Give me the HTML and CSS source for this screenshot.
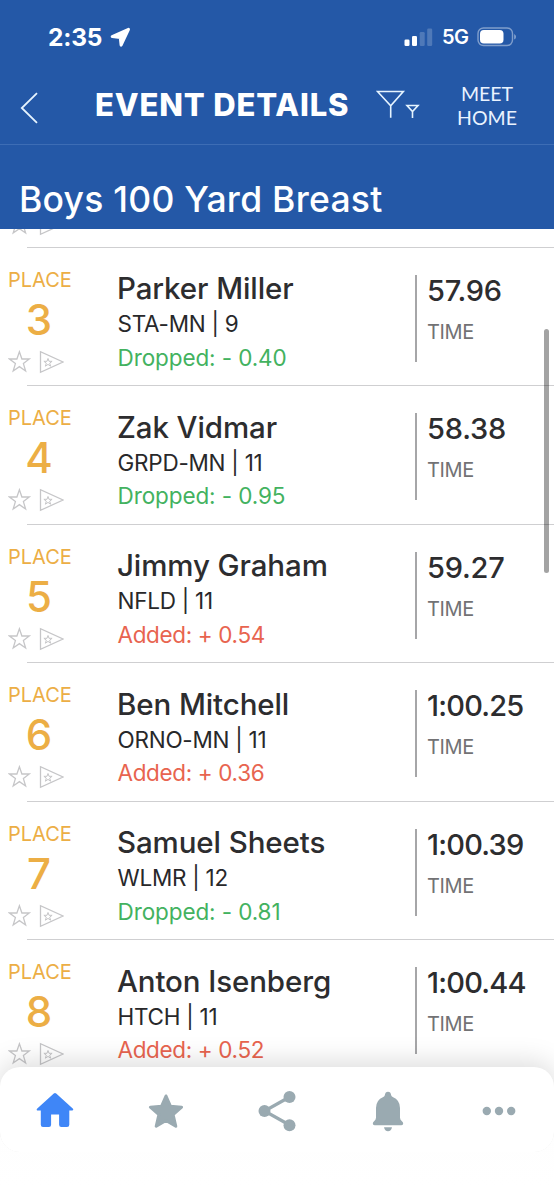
FILE: index.html
```html
<!DOCTYPE html>
<html lang="en">
  <head>
    <meta charset="UTF-8" />
    <meta name="viewport" content="width=device-width, initial-scale=1.0" />
    <title>Event Details</title>
    <link rel="stylesheet" href="styles.css">
  </head>
  <body>
    <!-- Shared row icons -->
    <svg class="sprite" aria-hidden="true">
      <symbol id="row-icons" viewBox="0 0 56 24">
        <g fill="none" stroke="#c6c6c8" stroke-width="1.3">
          <path d="M11.4 1.8l2.5 7.2h7.4l-5.9 4.6 2.2 7.4-6.2-4.4-6.2 4.4 2.2-7.4L1.500 9h7.400z" />
          <path d="M32.500 1.700v20.600L55 12z" />
          <path stroke-width="1" d="M40 8.500l1 2.800h3.100l-2.400 1.900.9 3-2.600-1.800-2.600 1.800.9-3-2.400-1.900H39z" />
        </g>
      </symbol>
    </svg>

    <header>
      <div class="status-bar">
        <span class="clock">2:35</span>
        <svg class="location" width="21" height="21" viewBox="0 0 21 21">
          <path fill="#fff" stroke="#fff" stroke-width="3" stroke-linejoin="round" d="M18.500 2.300L2.200 9.600l8.100 1 .8 7.600z" />
        </svg>
        <svg class="signal" width="29" height="19" viewBox="0 0 29 19">
          <g fill="#fff">
            <rect x="0.5" y="11.5" width="5" height="6.5" rx="1.3" />
            <rect x="8" y="8" width="5" height="10" rx="1.3" />
            <rect x="15.7" y="4" width="5" height="14" rx="1.3" opacity=".2" />
            <rect x="23.2" y="0.5" width="5" height="17.5" rx="1.3" opacity=".2" />
          </g>
        </svg>
        <span class="network">5G</span>
        <svg class="battery" width="40" height="20" viewBox="0 0 40 20">
          <rect x="1" y="1" width="34.5" height="17.5" rx="5.5" fill="none" stroke="#fff" stroke-opacity=".42" stroke-width="1.4" />
          <rect x="3" y="3" width="23.5" height="13.5" rx="3.8" fill="#fff" />
          <path d="M37.2 7v5.5q1.8-.8 1.8-2.7T37.2 7z" fill="#fff" opacity=".45" />
        </svg>
      </div>

      <nav class="nav-bar">
        <svg class="back" width="18" height="32" viewBox="0 0 18 32">
          <path fill="none" stroke="#e6f4ff" stroke-width="1.8" d="M17 1.200L1.800 16 17 30.800" />
        </svg>
        <h1>EVENT DETAILS</h1>
        <svg class="filter" width="44" height="30" viewBox="0 0 44 30">
          <g fill="none" stroke="#e6f4ff" stroke-width="1.6">
            <path d="M1.500 1.500H27.300L14.700 15.700zM14.700 15.200v12.500" />
            <path d="M31 15.500h11l-5.500 6zM36.500 21v7" />
          </g>
        </svg>
        <a class="meet-home">MEET<br />HOME</a>
      </nav>

      <h2>Boys 100 Yard Breast</h2>
    </header>

    <main>
      <div class="peek"><svg class="icons"><use href="#row-icons" /></svg></div>

      <article class="row">
        <div class="place">
          <small>PLACE</small>
          <strong>3</strong>
          <svg class="icons"><use href="#row-icons" /></svg>
        </div>
        <div class="swimmer">
          <h3>Parker Miller</h3>
          <p>STA-MN | 9</p>
          <p class="dropped">Dropped: - 0.40</p>
        </div>
        <div class="time">
          <strong>57.96</strong>
          <small>TIME</small>
        </div>
      </article>

      <article class="row">
        <div class="place">
          <small>PLACE</small>
          <strong>4</strong>
          <svg class="icons"><use href="#row-icons" /></svg>
        </div>
        <div class="swimmer">
          <h3>Zak Vidmar</h3>
          <p>GRPD-MN | 11</p>
          <p class="dropped">Dropped: - 0.95</p>
        </div>
        <div class="time">
          <strong>58.38</strong>
          <small>TIME</small>
        </div>
      </article>

      <article class="row">
        <div class="place">
          <small>PLACE</small>
          <strong>5</strong>
          <svg class="icons"><use href="#row-icons" /></svg>
        </div>
        <div class="swimmer">
          <h3>Jimmy Graham</h3>
          <p>NFLD | 11</p>
          <p class="added">Added: + 0.54</p>
        </div>
        <div class="time">
          <strong>59.27</strong>
          <small>TIME</small>
        </div>
      </article>

      <article class="row">
        <div class="place">
          <small>PLACE</small>
          <strong>6</strong>
          <svg class="icons"><use href="#row-icons" /></svg>
        </div>
        <div class="swimmer">
          <h3>Ben Mitchell</h3>
          <p>ORNO-MN | 11</p>
          <p class="added">Added: + 0.36</p>
        </div>
        <div class="time">
          <strong class="long">1:00.25</strong>
          <small>TIME</small>
        </div>
      </article>

      <article class="row">
        <div class="place">
          <small>PLACE</small>
          <strong>7</strong>
          <svg class="icons"><use href="#row-icons" /></svg>
        </div>
        <div class="swimmer">
          <h3>Samuel Sheets</h3>
          <p>WLMR | 12</p>
          <p class="dropped">Dropped: - 0.81</p>
        </div>
        <div class="time">
          <strong class="long">1:00.39</strong>
          <small>TIME</small>
        </div>
      </article>

      <article class="row">
        <div class="place">
          <small>PLACE</small>
          <strong>8</strong>
          <svg class="icons"><use href="#row-icons" /></svg>
        </div>
        <div class="swimmer">
          <h3>Anton Isenberg</h3>
          <p>HTCH | 11</p>
          <p class="added">Added: + 0.52</p>
        </div>
        <div class="time">
          <strong class="long">1:00.44</strong>
          <small>TIME</small>
        </div>
      </article>
    </main>

    <div class="scrollbar"></div>

    <footer>
      <nav class="tab-bar">
        <svg viewBox="0 0 44 44">
          <path fill="#3f86f7" d="M20.8 4.600q1.200-1 2.400 0L40 19.700q1 1.800-.8 1.800h-2.900v14.200q0 2.300-2.300 2.300h-5.700q-2.200 0-2.200-2.200V25.400h-8v10.400q0 2.200-2.200 2.200H10q-2.200 0-2.200-2.200V21.500H4.900q-1.900 0-.9-1.800z" />
        </svg>
        <svg viewBox="0 0 44 44">
          <path fill="#9aaab1" stroke="#9aaab1" stroke-width="3" stroke-linejoin="round" d="M22 7l4.400 10.200 11.200 1-8.500 7.300 2.700 11.800L22 31.500l-9.800 5.800 2.700-11.800-8.500-7.300 11.200-1z" />
        </svg>
        <svg viewBox="0 0 44 44">
          <path fill="none" stroke="#9aaab1" stroke-width="3.2" d="M34.500 8L9.500 22l25 14" />
          <g fill="#9aaab1">
            <circle cx="34.5" cy="8" r="6" />
            <circle cx="9.5" cy="22" r="6" />
            <circle cx="34.500" cy="36.2" r="6" />
          </g>
        </svg>
        <svg viewBox="0 0 44 44">
          <g fill="#9aaab1">
            <path d="M22 2.800q2.700 0 3.200 3.400.2 1.100 1.500 1.800Q34 11 34 19v9.500q0 2.200 1.700 3.500 1.500 1 1.500 2.500 0 1.800-1.800 1.800H8.600q-1.800 0-1.800-1.800 0-1.500 1.500-2.500Q10 30.700 10 28.500V19Q10 11 17.300 8q1.300-.7 1.500-1.800.5-3.400 3.200-3.400z" />
            <path d="M18 38.300h8q-.8 4-4 4t-4-4z" />
          </g>
        </svg>
        <svg viewBox="0 0 44 44">
          <g fill="#9aaab1">
            <circle cx="9.8" cy="22" r="4.200" />
            <circle cx="22" cy="22" r="4.200" />
            <circle cx="34.200" cy="22" r="4.200" />
          </g>
        </svg>
      </nav>
    </footer>
  </body>
</html>
```
FILE: styles.css
```css
/*
  Global styles
*/

* {
  margin: 0;
  padding: 0;
  box-sizing: border-box;
}
:root {
  --blue: #2458a7;
  --orange: #ecae45;
  --green: #43b25f;
  --red: #e8644f;
  --ink: #2d2d2f;
  --gray: #727274;
}
body {
  height: 1200px;
  overflow: hidden;
  position: relative;
  background-color: #fff;
  font-family: Inter, sans-serif;
}
svg {
  display: block;
  flex: none;
}
.sprite {
  width: 0;
  height: 0;
  position: absolute;
}

/*
  Header
*/

header {
  color: #fff;
  height: 228.5px;
  background-color: var(--blue);
}
.status-bar {
  height: 74px;
  display: flex;
  align-items: center;
  padding: 0 37px 0 48px;
}
.clock {
  width: 62px;
  font-size: 24.5px;
  font-weight: 700;
  letter-spacing: -0.2px;
}
.signal {
  margin-left: auto;
}
.network {
  width: 44px;
  padding-left: 9px;
  font-size: 20px;
  font-weight: 600;
  letter-spacing: -0.6px;
}
.nav-bar {
  height: 71px;
  display: flex;
  padding-left: 20px;
  border-bottom: 1.5px solid #3d6db5;
}
.back {
  margin-top: 18px;
}
h1 {
  width: 283px;
  padding: 12px 0 0 57px;
  font-size: 31px;
  font-weight: 800;
  line-height: 38px;
  letter-spacing: 0.85px;
  white-space: nowrap;
}
.filter {
  margin: 16px 0 0 55px;
}
.meet-home {
  flex: 1;
  padding-top: 8px;
  color: #eaf3ff;
  font-family: Lato, sans-serif;
  font-size: 19.5px;
  line-height: 24px;
  text-align: center;
}
h2 {
  padding: 33px 0 0 19px;
  font-size: 35.5px;
  font-weight: 500;
  line-height: 44px;
  letter-spacing: 0.25px;
  white-space: nowrap;
}

/*
  Results list
*/

.icons {
  width: 56px;
  height: 24px;
}
.peek {
  height: 19px;
  overflow: hidden;
  padding-left: 8px;
  position: relative;
}
.peek .icons {
  margin-top: -17px;
}
.peek::after,
.row::after {
  content: "";
  left: 27px;
  right: 0;
  bottom: 0;
  height: 1px;
  position: absolute;
  background-color: #cfcfd1;
}
.row:last-child::after {
  display: none;
}
.row {
  height: 138.6px;
  display: grid;
  position: relative;
  grid-template-columns: 118px 297px 1fr;
}
.row small,
.row strong {
  display: block;
}
.place {
  padding: 20px 0 0 8px;
  color: var(--orange);
}
.place small {
  width: 63px;
  font-size: 20px;
  line-height: 24px;
}
.place strong {
  width: 62px;
  font-size: 42px;
  font-weight: 500;
  line-height: 50px;
  text-align: center;
  margin-top: 3px;
}
.place .icons {
  margin-top: 5px;
}
.swimmer {
  padding-top: 22.5px;
}
.swimmer h3 {
  color: var(--ink);
  font-size: 29.5px;
  font-weight: 500;
  line-height: 36px;
  letter-spacing: -0.1px;
  margin-left: -1px;
}
.swimmer p {
  color: #28282a;
  font-size: 22.5px;
  line-height: 33.5px;
  letter-spacing: -0.25px;
  margin-left: -0.5px;
  position: relative;
  top: 1px;
}
.swimmer .dropped {
  color: var(--green);
  letter-spacing: -0.1px;
}
.swimmer .added {
  color: var(--red);
  letter-spacing: -0.35px;
}
.time {
  height: 87px;
  margin-top: 27px;
  padding-left: 10px;
  border-left: 2px solid #a6a6a8;
}
.time strong {
  color: var(--ink);
  font-size: 29px;
  font-weight: 500;
  line-height: 32px;
  letter-spacing: -0.2px;
}
.time .long {
  letter-spacing: -0.8px;
}
.time small {
  color: var(--gray);
  font-size: 20px;
  line-height: 24px;
  letter-spacing: -0.4px;
  margin-top: 13px;
}
.scrollbar {
  top: 329px;
  right: 5px;
  width: 5px;
  height: 244px;
  border-radius: 3px;
  position: absolute;
  background-color: rgba(0, 0, 0, 0.36);
}

/*
  Tab bar
*/

footer {
  left: 0;
  right: 0;
  bottom: 0;
  height: 133px;
  position: absolute;
  background: linear-gradient(transparent 20px, #fdfdfd 20px, #fff 120px);
}
.tab-bar {
  height: 85px;
  display: grid;
  align-items: center;
  justify-items: center;
  padding-top: 3px;
  border-radius: 20px;
  background-color: #fff;
  box-shadow: 0 -4px 28px rgba(0, 0, 0, 0.15);
  clip-path: inset(-40px 0 0 0 round 0 0 20px 20px);
  grid-template-columns: repeat(5, 1fr);
}
.tab-bar svg {
  width: 44px;
  height: 44px;
}
```
